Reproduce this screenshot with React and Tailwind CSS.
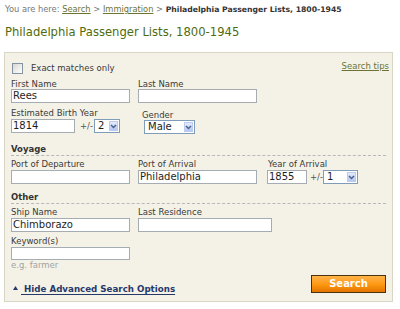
import React from "react";

function Label({ children, className = "" }) {
  return (
    <div className={"h-[10px] whitespace-nowrap text-[8.5px] leading-[10px] text-[#3a3a3a] " + className}>
      {children}
    </div>
  );
}

function Field({ value = "", className = "" }) {
  return (
    <div className={"h-[14px] border border-[#a5acb2] bg-white pl-[1px] text-[10px] leading-[12px] text-[#1e1e1e] " + className}>
      {value}
    </div>
  );
}

function Select({ value, className = "" }) {
  return (
    <div className={"flex h-[14px] items-center border border-[#7f9db9] bg-white " + className}>
      <span className="flex-1 pl-[3px] text-[10px] leading-[12px] text-[#1e1e1e]">{value}</span>
      <span className="mr-px flex h-[10px] w-[9px] items-center justify-center border border-[#bccbef] bg-linear-to-b from-[#e4ecfd] to-[#b3c7f1]">
        <svg width="7" height="5" viewBox="0 0 7 5">
          <path d="M1 1L3.5 3.5L6 1" fill="none" stroke="#4d5f8c" strokeWidth="1.5" />
        </svg>
      </span>
    </div>
  );
}

function Header({ children, className = "" }) {
  return (
    <div className={"h-[12px] w-[375px] border-b border-dashed border-[#b8b8b8] text-[8.5px] font-bold leading-[11px] text-[#333] " + className}>
      {children}
    </div>
  );
}

export default function App() {
  return (
    <div className="h-[309px] w-[400px] overflow-hidden bg-white font-['DejaVu_Sans',sans-serif]">
      <div className="h-[14px] whitespace-nowrap pl-[5px] pt-[4px] text-[8.3px] leading-[10px] text-[#777]">
        You are here: <a className="text-[#6b7433] underline">Search</a> &gt;{" "}
        <a className="text-[#6b7433] underline">Immigration</a> &gt;{" "}
        <b className="text-[7.7px] text-[#333]">Philadelphia Passenger Lists, 1800-1945</b>
      </div>
      <h1 className="mt-[11px] whitespace-nowrap pl-[5px] text-[11.6px] leading-[14px] text-[#4e6b10]">
        Philadelphia Passenger Lists, 1800-1945
      </h1>

      <div className="ml-[4px] mt-[13px] h-[250px] w-[389px] border border-[#d9d6c6] bg-[#f4f2e7] pl-[6px] pr-[3px] pt-[9px]">
        {/* Row A */}
        <div className="flex h-[12px] items-start justify-between">
          <div className="flex items-start">
            <div className="ml-px mt-px h-[11px] w-[11px] border border-[#8393a4] bg-linear-to-br from-[#d8d8d2] to-white" />
            <span className="ml-[8px] mt-px text-[8.5px] leading-[10px] text-[#3a3a3a]">Exact matches only</span>
          </div>
          <a className="-mt-px text-[8.5px] leading-[10px] text-[#6b7433] underline">Search tips</a>
        </div>

        {/* Row B */}
        <div className="mt-[5px] flex">
          <div className="w-[119px]">
            <Label>First Name</Label>
            <Field value="Rees" className="w-[119px]" />
          </div>
          <div className="ml-[8px] w-[119px]">
            <Label>Last Name</Label>
            <Field className="w-[119px]" />
          </div>
        </div>

        {/* Row C */}
        <div className="mt-[5px] flex h-[25px] items-start">
          <div className="w-[110px]">
            <Label>Estimated Birth Year</Label>
            <div className="mt-px flex items-center">
              <Field value="1814" className="w-[64px]" />
              <span className="ml-[5px] text-[8.5px] leading-[10px] text-[#555]">+/-</span>
              <Select value="2" className="ml-px w-[26px]" />
            </div>
          </div>
          <div className="ml-[21px] pt-[2px]">
            <Label>Gender</Label>
            <Select value="Male" className="ml-[2px] w-[51px]" />
          </div>
        </div>

        <Header className="mt-[11px]">Voyage</Header>

        <div className="mt-[3px] flex">
          <div className="w-[119px]">
            <Label>Port of Departure</Label>
            <Field className="mt-px w-[119px]" />
          </div>
          <div className="ml-[8px] w-[119px]">
            <Label>Port of Arrival</Label>
            <Field value="Philadelphia" className="mt-px w-[119px]" />
          </div>
          <div className="ml-[10px]">
            <Label className="ml-px">Year of Arrival</Label>
            <div className="mt-px flex items-center">
              <Field value="1855" className="w-[40px]" />
              <span className="ml-[3px] text-[8.5px] leading-[10px] text-[#555]">+/-</span>
              <Select value="1" className="w-[35px]" />
            </div>
          </div>
        </div>

        <Header className="mt-[8px]">Other</Header>

        <div className="mt-[3px] flex">
          <div className="w-[119px]">
            <Label>Ship Name</Label>
            <Field value="Chimborazo" className="mt-px w-[119px]" />
          </div>
          <div className="ml-[8px]">
            <Label>Last Residence</Label>
            <Field className="mt-px w-[134px]" />
          </div>
        </div>

        <div className="mt-[4px] w-[119px]">
          <Label>Keyword(s)</Label>
          <div className="mt-px h-[13px] w-[119px] border border-[#a5acb2] bg-white" />
        </div>
        <div className="h-[10px] text-[8.5px] leading-[10px] text-[#a3a3a3]">e.g. farmer</div>

        <div className="mt-[5px] flex w-[375px] items-start justify-between">
          <div className="mt-[9px] flex items-start text-[8.7px] font-bold leading-[10px] text-[#27386b]">
            <svg className="ml-[2px] mt-[2px]" width="5" height="4" viewBox="0 0 5 4">
              <polygon points="2.5,0 5,4 0,4" fill="#27386b" />
            </svg>
            <a className="ml-[3px] underline underline-offset-2">{"\u00a0"}Hide Advanced Search Options</a>
          </div>
          <button className="flex h-[18px] w-[75px] items-center justify-center border border-[#4b3310] bg-linear-to-b from-[#ffb347] via-[#ff9a12] to-[#e37400] text-[10px] font-bold leading-[12px] text-white">
            Search
          </button>
        </div>
      </div>
    </div>
  );
}
